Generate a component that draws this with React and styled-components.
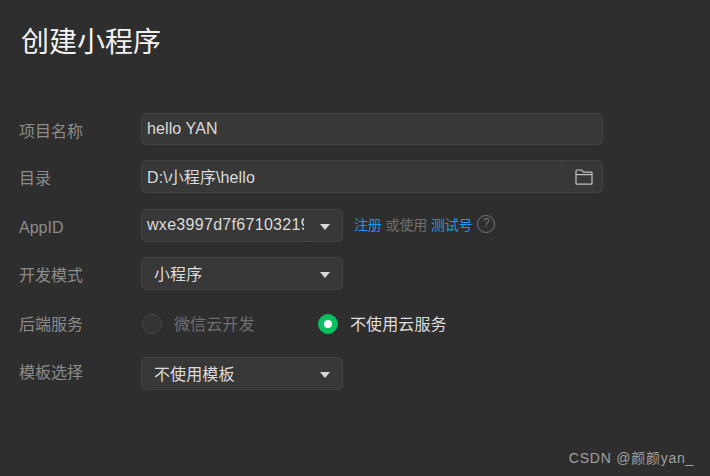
import styled, { createGlobalStyle } from 'styled-components'

const GlobalStyle = createGlobalStyle`
	html, body {
		margin: 0;
		padding: 0;
		background-color: #2e2e2e;
	}
`

const FONT = `"Liberation Sans", "Noto Sans CJK SC", sans-serif`

const Page = styled.div`
	width: 710px;
	height: 476px;
	box-sizing: border-box;
	padding: 24px 107px 0 19px;
	background-color: #2e2e2e;
	font-family: ${FONT};
	position: relative;
	overflow: hidden;
`

const Title = styled.h1`
	margin: 0 0 0 2px;
	height: 38px;
	line-height: 38px;
	font-size: 28px;
	font-weight: 400;
	color: #f2f2f2;
`

const Form = styled.div`
	margin-top: 51px;
	display: flex;
	flex-direction: column;
`

const Row = styled.div`
	display: grid;
	grid-template-columns: 122px 1fr;
	align-items: center;
	margin-bottom: ${props => props.$after || 0}px;
`

const Label = styled.div`
	font-size: 16px;
	line-height: 20px;
	color: #8c8c8c;
	position: relative;
	top: ${props => props.$shift || 0}px;
`

const Field = styled.div`
	box-sizing: border-box;
	height: ${props => props.$height || 33}px;
	width: ${props => props.$short ? '202px' : '462px'};
	display: flex;
	align-items: center;
	background-color: #383838;
	border: 1px solid #434343;
	border-radius: 5px;
	color: #dcdcdc;
	font-size: 16px;
`

const FieldText = styled.span`
	flex: 1;
	min-width: 0;
	padding-left: ${props => props.$inset ? 12 : 5}px;
	white-space: nowrap;
	overflow: hidden;
	letter-spacing: 0.1px;
	position: relative;
	top: ${props => props.$inset ? -1 : -0.5}px;
`

const ClippedId = styled(FieldText)`
	flex: none;
	width: 157px;
	letter-spacing: 0.3px;
`

const SideButton = styled.div`
	width: ${props => props.$width || 35}px;
	height: 100%;
	flex: none;
	margin-left: auto;
	padding-left: ${props => props.$pad || 0}px;
	display: flex;
	align-items: center;
	justify-content: center;
	border-left: 1px solid ${props => props.$line ? '#3c3c3c' : 'transparent'};
	box-sizing: border-box;
`

const Arrow = styled.span`
	display: block;
	width: 0;
	height: 0;
	border-left: 5px solid transparent;
	border-right: 5px solid transparent;
	border-top: 6px solid #d8d8d8;
	margin-top: 3px;
`

const Inline = styled.div`
	display: flex;
	align-items: center;
`

const Links = styled.div`
	margin-left: 11px;
	display: flex;
	align-items: center;
	font-size: 14px;
	letter-spacing: -0.2px;
	color: #6f6f6f;
	position: relative;
	top: -2px;
`

const LinkText = styled.a`
	color: #1a97f0;
	text-decoration: none;
`

const Middle = styled.span`
	margin: 0 4px;
`

const Help = styled.span`
	width: 18px;
	height: 18px;
	margin-left: 5px;
	box-sizing: border-box;
	border: 1.5px solid #747474;
	border-radius: 50%;
	color: #747474;
	font-size: 12px;
	line-height: 15px;
	text-align: center;
	letter-spacing: 0;
`

const RadioItem = styled.label`
	display: flex;
	align-items: center;
	height: 32px;
	width: ${props => props.$width}px;
	color: ${props => props.$checked ? '#dedede' : '#6f6f6f'};
	font-size: 16px;
	letter-spacing: 0.1px;
`

const RadioText = styled.span`
	position: relative;
	top: -1px;
`

const RadioDot = styled.span`
	width: 20px;
	height: 20px;
	margin: 0 12px 0 1px;
	box-sizing: border-box;
	flex: none;
	border-radius: 50%;
	display: flex;
	align-items: center;
	justify-content: center;
	background-color: ${props => props.$checked ? '#07c160' : '#333333'};
	border: 1px solid ${props => props.$checked ? '#07c160' : '#454545'};

	&::after {
		content: '';
		display: ${props => props.$checked ? 'block' : 'none'};
		width: 8px;
		height: 8px;
		border-radius: 50%;
		background-color: #ffffff;
	}
`

const Watermark = styled.div`
	position: absolute;
	right: 16px;
	bottom: 9px;
	font-size: 14px;
	line-height: 18px;
	letter-spacing: 0.75px;
	color: #a0a0a0;
`

const FolderIcon = () => (
	<svg width="18" height="16" viewBox="0 0 18 16" fill="none" stroke="#c4c4c4" strokeWidth="1.2">
		<path d="M1 14.5V2.2C1 1.5 1.4 1 2.1 1H6.6L8.6 3.2H16.2C16.7 3.2 17 3.6 17 4.1V14.5C17 15 16.7 15.2 16.2 15.2H1.8C1.3 15.2 1 15 1 14.5Z" />
		<path d="M1 5.6H17" />
	</svg>
)

const SelectField = ({ children }) => (
	<Field $short>
		<FieldText $inset>{children}</FieldText>
		<SideButton><Arrow /></SideButton>
	</Field>
)

const App = () => {
	return (
		<Page>
			<GlobalStyle />
			<Title>创建小程序</Title>
			<Form>
				<Row $after={15}>
					<Label $shift={3}>项目名称</Label>
					<Field $height={32}><FieldText>hello YAN</FieldText></Field>
				</Row>
				<Row $after={16}>
					<Label $shift={2}>目录</Label>
					<Field>
						<FieldText>D:\小程序\hello</FieldText>
						<SideButton $line $width={41} $pad={3}><FolderIcon /></SideButton>
					</Field>
				</Row>
				<Row $after={15}>
					<Label $shift={2}>AppID</Label>
					<Inline>
						<Field $short>
							<ClippedId>wxe3997d7f67103219</ClippedId>
							<SideButton $line><Arrow /></SideButton>
						</Field>
						<Links>
							<LinkText>注册</LinkText>
							<Middle>或使用</Middle>
							<LinkText>测试号</LinkText>
							<Help>?</Help>
						</Links>
					</Inline>
				</Row>
				<Row $after={18}>
					<Label $shift={2}>开发模式</Label>
					<SelectField>小程序</SelectField>
				</Row>
				<Row $after={17}>
					<Label $shift={1}>后端服务</Label>
					<Inline>
						<RadioItem $width={176}><RadioDot /><RadioText>微信云开发</RadioText></RadioItem>
						<RadioItem $width={140} $checked><RadioDot $checked /><RadioText>不使用云服务</RadioText></RadioItem>
					</Inline>
				</Row>
				<Row>
					<Label $shift={-1}>模板选择</Label>
					<SelectField>不使用模板</SelectField>
				</Row>
			</Form>
			<Watermark>CSDN @颜颜yan_</Watermark>
		</Page>
	)
}

export default App
